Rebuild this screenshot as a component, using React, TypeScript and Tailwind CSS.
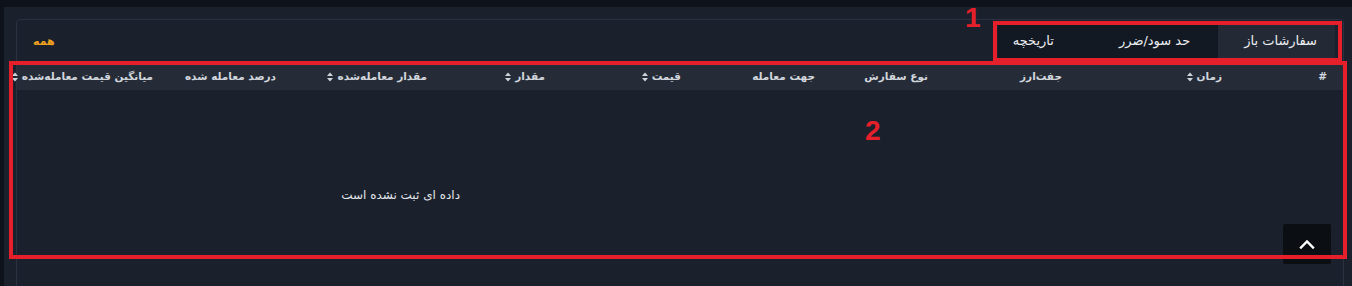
import React from "react";

const fa = { fontFamily: '"DejaVu Sans", "Noto Sans", sans-serif' };

function SortIcon() {
  return (
    <svg width="6" height="10" viewBox="0 0 6 10" className="shrink-0">
      <path d="M3 0.5 L6 4 L0 4 Z" fill="#cfd3da" />
      <path d="M3 9.5 L6 6 L0 6 Z" fill="#cfd3da" />
    </svg>
  );
}

const cols: { label: string; w: number; sort?: boolean; pr?: number }[] = [
  { label: "#", w: 121, pr: 16 },
  { label: "زمان", w: 160, sort: true },
  { label: "جفت‌ارز", w: 134 },
  { label: "نوع سفارش", w: 113 },
  { label: "جهت معامله", w: 134 },
  { label: "قیمت", w: 136, sort: true },
  { label: "مقدار", w: 118, sort: true },
  { label: "مقدار معامله‌شده", w: 151, sort: true },
  { label: "درصد معامله شده", w: 123 },
  { label: "میانگین قیمت معامله‌شده", w: 136, sort: true },
];

export default function App() {
  return (
    <div className="relative w-[1352px] h-[286px] overflow-hidden bg-[#0e131b] pt-[7px] pl-[4px]">
      <div className="h-full bg-[#1a212d] pt-[12px] pl-[12px] pr-[8px]">
        <div className="h-[400px] border border-[#2a3241] rounded-[4px] bg-[#1a212d]">
          {/* top bar */}
          <div dir="rtl" className="flex items-start justify-between h-[44px] pt-[2px] pr-[8px] pl-[16px]">
            <div className="flex h-[37px] bg-[#131923] text-[13px] text-[#eceef2]" style={fa}>
              <div className="flex items-center bg-[#232a36] pr-[18px] pl-[26px]">سفارشات باز</div>
              <div className="flex items-center pr-[28px] pl-[27px]">حد سود/ضرر</div>
              <div className="flex items-center pr-[38px] pl-[15px]">تاریخچه</div>
            </div>
            <div className="self-center text-[11px] font-bold text-[#f2a41f] mt-[-2px]" style={fa}>همه</div>
          </div>
          {/* header */}
          <div dir="rtl" className="flex h-[26px] bg-[#252c38] text-[10.5px] font-bold text-[#d2d6dd]" style={fa}>
            {cols.map((c, i) => (
              <div
                key={i}
                className="flex items-center gap-[4px] shrink-0"
                style={{ width: c.w, paddingRight: c.pr ?? 0 }}
              >
                <span className="whitespace-nowrap">{c.label}</span>
                {c.sort && <SortIcon />}
              </div>
            ))}
          </div>
          {/* body */}
          <div className="pt-[96px] pl-[328px]">
            <div dir="rtl" className="w-[115px] text-center text-[12px] text-[#e2e5ea] whitespace-nowrap" style={fa}>
              داده ای ثبت نشده است
            </div>
          </div>
        </div>
      </div>

      {/* scroll top button */}
      <button className="absolute left-[1283px] top-[224px] w-[48px] h-[40px] rounded-[2px] bg-[#0b0e13] flex items-center justify-center">
        <svg width="16" height="10" viewBox="0 0 16 10">
          <path d="M2 8.5 L8 2.5 L14 8.5" stroke="#ffffff" strokeWidth="2.4" fill="none" strokeLinecap="square" />
        </svg>
      </button>

      {/* annotations */}
      <div className="absolute left-[993px] top-[21px] w-[349px] h-[41px] border-[4px] border-[#e5202a]" />
      <div className="absolute left-[9px] top-[61px] w-[1338px] h-[198px] border-[4px] border-[#e5202a]" />
      <div className="absolute left-[965px] top-[4px] text-[28px] font-bold text-[#e5202a] leading-none" style={{ fontFamily: '"Liberation Sans", Arial, sans-serif' }}>1</div>
      <div className="absolute left-[865px] top-[117px] text-[28px] font-bold text-[#e5202a] leading-none" style={{ fontFamily: '"Liberation Sans", Arial, sans-serif' }}>2</div>
    </div>
  );
}
